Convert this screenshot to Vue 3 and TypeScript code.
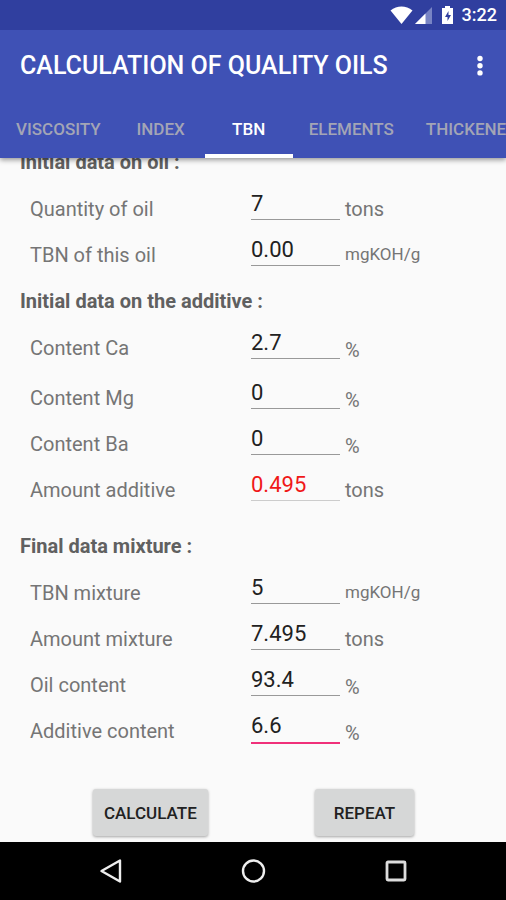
<script setup lang="ts">
import { ref } from 'vue'

interface Field {
  id: string
  label: string
  unit: string
  value: string
  tone?: 'result' | 'active'
  spaced?: boolean
}

interface Section {
  title: string
  spaced?: boolean
  fields: Field[]
}

const tabs = ['VISCOSITY', 'INDEX', 'TBN', 'ELEMENTS', 'THICKENER']
const activeTab = ref('TBN')

const sections = ref<Section[]>([
  {
    title: 'Initial data on oil :',
    fields: [
      { id: 'oil-quantity', label: 'Quantity of oil', unit: 'tons', value: '7' },
      { id: 'oil-tbn', label: 'TBN of this oil', unit: 'mgKOH/g', value: '0.00' },
    ],
  },
  {
    title: 'Initial data on the additive :',
    fields: [
      { id: 'content-ca', label: 'Content Ca', unit: '%', value: '2.7', spaced: true },
      { id: 'content-mg', label: 'Content Mg', unit: '%', value: '0' },
      { id: 'content-ba', label: 'Content Ba', unit: '%', value: '0' },
      { id: 'additive-amount', label: 'Amount additive', unit: 'tons', value: '0.495', tone: 'result' },
    ],
  },
  {
    title: 'Final data mixture :',
    spaced: true,
    fields: [
      { id: 'mixture-tbn', label: 'TBN mixture', unit: 'mgKOH/g', value: '5' },
      { id: 'mixture-amount', label: 'Amount mixture', unit: 'tons', value: '7.495' },
      { id: 'oil-content', label: 'Oil content', unit: '%', value: '93.4' },
      { id: 'additive-content', label: 'Additive content', unit: '%', value: '6.6', tone: 'active' },
    ],
  },
])

function unitClass(unit: string): string {
  if (unit === '%') return 'unit-percent'
  return unit === 'tons' ? 'unit-tons' : 'unit-tbn'
}
</script>

<template>
  <div class="app">
    <header class="header">
      <div class="status">
        <svg class="status-icons" width="68" height="22" viewBox="0 0 68 22" aria-hidden="true">
          <path d="M0.500 6.500C7 1 16 1 22.500 6.500L11.500 20Z" fill="#fff" />
          <path d="M42 3V20H25Z" fill="#7884c4" />
          <path d="M35.500 9.500V20H25Z" fill="#fff" />
          <path d="M55 2h5v2h3v16H52V4h3z" fill="#fff" />
          <path d="M58.500 7l-3.500 6h2.500v4l3.500-6H58.500z" fill="#303f9f" />
        </svg>
        <span class="clock">3:22</span>
      </div>
      <div class="toolbar">
        <h1 class="title">CALCULATION OF QUALITY OILS</h1>
        <button class="menu" type="button" aria-label="More options">
          <svg width="8" height="22" viewBox="0 0 8 22" aria-hidden="true">
            <circle cx="4" cy="3.500" r="2.700" fill="#fff" />
            <circle cx="4" cy="10.700" r="2.700" fill="#fff" />
            <circle cx="4" cy="17.900" r="2.700" fill="#fff" />
          </svg>
        </button>
      </div>
      <div class="tabs" role="tablist">
        <button
          v-for="tab in tabs"
          :key="tab"
          type="button"
          role="tab"
          class="tab"
          :class="{ selected: tab === activeTab }"
          :aria-selected="tab === activeTab"
          @click="activeTab = tab"
        >
          {{ tab }}
        </button>
      </div>
    </header>

    <main class="content">
      <form class="form" @submit.prevent>
        <section v-for="section in sections" :key="section.title" :class="{ 'section-spaced': section.spaced }">
          <h2 class="heading">{{ section.title }}</h2>
          <div v-for="field in section.fields" :key="field.id" class="row" :class="{ 'row-spaced': field.spaced }">
            <label class="label" :for="field.id">{{ field.label }}</label>
            <input
              :id="field.id"
              v-model="field.value"
              class="input"
              :class="field.tone"
              type="text"
              inputmode="decimal"
            />
            <span class="unit" :class="unitClass(field.unit)">{{ field.unit }}</span>
          </div>
        </section>
        <div class="actions">
          <button class="action" type="submit">CALCULATE</button>
          <button class="action" type="button">REPEAT</button>
        </div>
      </form>
    </main>

    <nav class="navbar" aria-label="System">
      <button class="nav-button" type="button" aria-label="Back">
        <svg width="24" height="26" viewBox="0 0 24 26" aria-hidden="true">
          <path d="M21 2.500V23.500L2.500 13Z" fill="none" stroke="#eee" stroke-width="2.400" stroke-linejoin="round" />
        </svg>
      </button>
      <button class="nav-button" type="button" aria-label="Home">
        <svg width="26" height="26" viewBox="0 0 26 26" aria-hidden="true">
          <circle cx="13.500" cy="13" r="10.500" fill="none" stroke="#eee" stroke-width="2.400" />
        </svg>
      </button>
      <button class="nav-button" type="button" aria-label="Recent apps">
        <svg width="24" height="24" viewBox="0 0 24 24" aria-hidden="true">
          <rect x="4" y="3" width="18" height="18" rx="1" fill="none" stroke="#ddd" stroke-width="2.800" />
        </svg>
      </button>
    </nav>
  </div>
</template>

<style>
body {
  margin: 0;
  background: #fafafa;
}
</style>

<style scoped>
.app {
  display: flex;
  flex-direction: column;
  min-height: 100vh;
  background: #fafafa;
  font-family: Roboto, "Liberation Sans", sans-serif;
  overflow: hidden;
}

button {
  border: 0;
  padding: 0;
  background: none;
  font-family: inherit;
  cursor: pointer;
}

.header {
  position: relative;
  z-index: 1;
  background: #3f51b5;
  box-shadow: 0 2px 5px rgba(0, 0, 0, 0.4);
}

.status {
  display: flex;
  align-items: center;
  justify-content: flex-end;
  gap: 4px;
  height: 30px;
  padding-right: 9px;
  background: #303f9f;
}

.clock {
  color: #fff;
  font-size: 18px;
  font-weight: 500;
  line-height: 30px;
}

.toolbar {
  display: flex;
  align-items: center;
  justify-content: space-between;
  height: 71px;
  padding: 0 18px 0 20px;
}

.title {
  margin: 0;
  color: #fff;
  font-size: 25px;
  font-weight: 500;
  line-height: 30px;
  white-space: nowrap;
}

.menu {
  display: flex;
  padding: 0 4px;
}

.tabs {
  display: flex;
  height: 57px;
  overflow: hidden;
}

.tab {
  flex: none;
  min-width: 88px;
  padding: 0 16px;
  border-top: 3px solid transparent;
  border-bottom: 4px solid transparent;
  color: #a3a5b5;
  font-size: 17px;
  font-weight: 500;
}

.tab.selected {
  border-bottom-color: #fff;
  color: #fff;
}

.content {
  flex: 1;
  overflow: hidden;
}

.form {
  margin-top: -19px;
}

.heading {
  margin: 0;
  padding-left: 20px;
  color: #606060;
  font-size: 20px;
  font-weight: 700;
  line-height: 47px;
}

.section-spaced {
  padding-top: 10px;
}

.row {
  display: grid;
  grid-template-columns: 221fr 89fr 166fr;
  align-items: start;
  height: 46px;
  padding-left: 30px;
}

.row-spaced {
  margin-bottom: 4px;
}

.label,
.unit {
  color: #757575;
  font-size: 20px;
  line-height: 46px;
}

.unit {
  padding-left: 5px;
}

.unit-tbn {
  font-size: 17px;
  line-height: 44px;
}

.unit-percent {
  line-height: 50px;
}

.input {
  box-sizing: border-box;
  width: 100%;
  height: 32px;
  margin: 2px 0 0;
  padding: 0;
  border: 0;
  border-bottom: 1px solid #999;
  border-radius: 0;
  outline: 0;
  background: none;
  color: #212121;
  font-family: inherit;
  font-size: 22px;
}

.input.result {
  border-bottom-color: #ccc;
  color: #f01818;
}

.input.active {
  height: 34px;
  padding-bottom: 1px;
  border-bottom: 2px solid #f0307a;
}

.actions {
  display: flex;
  justify-content: space-between;
  padding: 35px 92px 6px 93px;
}

.action {
  min-width: 99px;
  height: 47px;
  padding: 0 11px;
  border-radius: 3px;
  background: #d6d7d7;
  box-shadow: 0 1px 3px rgba(0, 0, 0, 0.35);
  color: #212121;
  font-size: 17px;
  font-weight: 500;
}

.navbar {
  display: grid;
  grid-template-columns: repeat(3, 1fr);
  height: 58px;
  padding: 0 40px;
  background: #000;
}

.nav-button {
  display: flex;
  align-items: center;
  justify-content: center;
}
</style>
